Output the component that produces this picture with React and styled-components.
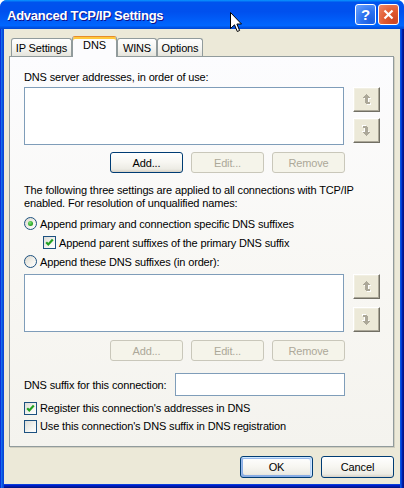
import styled, { createGlobalStyle } from "styled-components";

const GlobalStyle = createGlobalStyle`
  html, body {
    margin: 0;
    padding: 0;
    background: #fff;
  }
  body {
    font-family: "Liberation Sans", Arial, sans-serif;
    font-size: 11px;
    letter-spacing: -0.15px;
    color: #000;
  }
`;

const Window = styled.div`
  position: relative;
  width: 404px;
  height: 488px;
  display: flex;
  flex-direction: column;
  border-radius: 7px 7px 0 0;
  overflow: hidden;
  background: #0054e3;
`;

const TitleBar = styled.div`
  height: 29px;
  box-sizing: border-box;
  display: flex;
  align-items: center;
  padding: 1px 5px 0 7px;
  background: linear-gradient(
    180deg,
    #0997ff 0%,
    #0053ee 8%,
    #0050ee 40%,
    #0066ff 88%,
    #0055e8 94%,
    #0047d2 100%
  );
  color: #fff;
  font-weight: bold;
  font-size: 13px;
  text-shadow: 1px 1px #0f1089;
`;

const TitleText = styled.span`
  flex: 1;
  letter-spacing: -0.25px;
`;

const Controls = styled.div`
  display: flex;
  gap: 2px;
  margin-top: -2px;
`;

const ControlButton = styled.div`
  width: 21px;
  height: 21px;
  box-sizing: border-box;
  border: 1px solid #fff;
  border-radius: 3px;
  display: flex;
  align-items: center;
  justify-content: center;
  background: ${(p) =>
    p.$close
      ? "radial-gradient(circle at 80% 85%, #cc4624 0%, #e0592f 45%, #f08a6a 100%)"
      : "radial-gradient(circle at 80% 85%, #1b5ee0 0%, #2d73f0 45%, #6fa6ff 100%)"};
  color: #fff;
  font-size: 15px;
  font-weight: bold;
  text-shadow: none;
`;

const Body = styled.div`
  flex: 1;
  display: flex;
  flex-direction: column;
  background: #ece9d8;
  padding: 7px 10px 10px 9px;
  box-shadow: inset 1px 0 #0831d9, inset 2px 0 #166aee, inset 3px 0 #0855dd,
    inset 4px 0 #0a46d8, inset -1px 0 #00138c, inset -2px 0 #001ea0,
    inset -3px 0 #003bda, inset -4px 0 #0855dd, inset 0 -1px #00138c,
    inset 0 -2px #001ea0, inset 0 -3px #0019cf, inset 0 -4px #0a3fd6;
`;

const TabList = styled.div`
  display: flex;
  align-items: flex-end;
  height: 20px;
  margin-left: 2px;
  position: relative;
  z-index: 1;
`;

const Tab = styled.div`
  width: ${(p) => p.$w}px;
  height: ${(p) => (p.$active ? 21 : 18)}px;
  margin-bottom: ${(p) => (p.$active ? -1 : 0)}px;
  box-sizing: border-box;
  border: 1px solid #919b9c;
  border-bottom: none;
  border-top-color: ${(p) => (p.$active ? "#e68b2c" : "#919b9c")};
  border-radius: 3px 3px 0 0;
  background: ${(p) =>
    p.$active ? "#fcfcfe" : "linear-gradient(180deg, #fff 0%, #f3f3ef 60%, #e5e4dc 100%)"};
  box-shadow: ${(p) => (p.$active ? "inset 0 2px #ffc83c" : "none")};
  display: flex;
  justify-content: center;
  align-items: center;
  padding-bottom: ${(p) => (p.$active ? 4 : 0)}px;
`;

const Panel = styled.div`
  border: 1px solid #919b9c;
  box-shadow: 1px 1px 0 #d0cebf;
  background: linear-gradient(180deg, #fcfcfe 0%, #f8f7f3 60%, #f4f3ee 100%);
  padding: 14px 13px 11px 14px;
  display: flex;
  flex-direction: column;
`;

const Label = styled.div`
  line-height: 13px;
  margin-top: ${(p) => p.$mt || 0}px;
`;

const ListRow = styled.div`
  display: flex;
  gap: 9px;
  margin-top: ${(p) => p.$mt}px;
`;

const ListBox = styled.div`
  width: 321px;
  height: 58px;
  box-sizing: border-box;
  border: 1px solid #7f9db9;
  background: #fff;
`;

const SideButtons = styled.div`
  display: flex;
  flex-direction: column;
  gap: ${(p) => p.$gap}px;
`;

const MoveButton = styled.div`
  width: 27px;
  height: 25px;
  box-sizing: border-box;
  background: #ece9d8;
  border: 1px solid;
  border-color: #fff #716f64 #716f64 #fff;
  box-shadow: inset -1px -1px #aca899, inset 1px 1px #f1efe2;
  display: flex;
  align-items: center;
  justify-content: center;
`;

const ButtonRow = styled.div`
  display: flex;
  justify-content: flex-end;
  gap: 8px;
  width: 321px;
  margin-top: ${(p) => p.$mt}px;
`;

const PushButton = styled.div`
  width: 73px;
  height: ${(p) => p.$h || 21}px;
  box-sizing: border-box;
  border: 1px solid ${(p) => (p.$disabled ? "#c9c7ba" : "#003c74")};
  border-radius: 3px;
  background: ${(p) =>
    p.$disabled
      ? "#f5f4ea"
      : "linear-gradient(180deg, #fff 0%, #f7f6f1 50%, #ecebe4 85%, #d6d0c5 100%)"};
  color: ${(p) => (p.$disabled ? "#aca899" : "#000")};
  box-shadow: ${(p) =>
    p.$default
      ? "inset -1px 1px #cee7ff, inset 1px 2px #98b8ea, inset -2px 2px #bcd4f6, inset 1px -1px #89ade4, inset 2px -2px #89ade4"
      : "none"};
  display: flex;
  align-items: center;
  justify-content: center;
`;

const Paragraph = styled.div`
  line-height: 13px;
  margin-top: 11px;
`;

const Options = styled.div`
  margin-top: ${(p) => p.$mt}px;
`;

const OptionRow = styled.div`
  display: flex;
  align-items: center;
  height: ${(p) => p.$h || 19}px;
  padding-left: ${(p) => p.$indent || 0}px;
  gap: 3px;
`;

const Radio = styled.span`
  width: 13px;
  height: 13px;
  box-sizing: border-box;
  border-radius: 50%;
  border: 1px solid #1c5180;
  background: linear-gradient(135deg, #dcd9ce 0%, #f4f3ee 60%, #fff 100%);
  display: flex;
  align-items: center;
  justify-content: center;

  &::after {
    content: "";
    display: ${(p) => (p.$checked ? "block" : "none")};
    width: 5px;
    height: 5px;
    border-radius: 50%;
    background: radial-gradient(circle at 40% 35%, #80e67c 0%, #2ea72a 60%, #1a8f16 100%);
  }
`;

const Box = styled.span`
  width: 13px;
  height: 13px;
  box-sizing: border-box;
  border: 1px solid #1c5180;
  background: linear-gradient(135deg, #dcdcd7 0%, #f4f4f0 60%, #fff 100%);
  display: flex;
  align-items: center;
  justify-content: center;
`;

const SuffixRow = styled.div`
  display: flex;
  align-items: center;
  margin-top: 12px;
`;

const SuffixLabel = styled.span`
  width: 151px;
`;

const TextInput = styled.div`
  width: 170px;
  height: 23px;
  box-sizing: border-box;
  border: 1px solid #7f9db9;
  background: #fff;
`;

const Footer = styled.div`
  display: flex;
  justify-content: flex-end;
  gap: 8px;
  margin-top: 9px;
`;

const Cursor = styled.svg`
  position: absolute;
  left: 230px;
  top: 12px;
`;

const ArrowIcon = ({ down }) => (
  <svg width="10" height="12" viewBox="0 0 10 12" shapeRendering="crispEdges">
    <g transform={down ? "rotate(180 4.5 5.5)" : undefined}>
      <path
        d="M5 1h1v1h-1z M4 2h3v1h-3z M3 3h5v1h-5z M2 4h7v1h-7z M4 5h3v4h-3z M4 9h5v1h-5z M5 10h4v1h-4z"
        fill="#fff"
      />
      <path
        d="M4 0h1v1h-1z M3 1h3v1h-3z M2 2h5v1h-5z M1 3h7v1h-7z M3 4h3v4h-3z M3 8h5v1h-5z M4 9h4v1h-4z"
        fill="#aca899"
      />
    </g>
  </svg>
);

const Check = () => (
  <svg width="11" height="11" viewBox="0 0 11 11">
    <path d="M2.2 5.2 L4.3 7.4 L8.8 2.6" fill="none" stroke="#21a121" strokeWidth="2.2" />
  </svg>
);

const Checkbox = ({ checked }) => <Box>{checked && <Check />}</Box>;

const MoveButtons = ({ gap }) => (
  <SideButtons $gap={gap}>
    <MoveButton>
      <ArrowIcon />
    </MoveButton>
    <MoveButton>
      <ArrowIcon down />
    </MoveButton>
  </SideButtons>
);

const App = () => {
  return (
    <>
      <GlobalStyle />
      <Window>
        <TitleBar>
          <TitleText>Advanced TCP/IP Settings</TitleText>
          <Controls>
            <ControlButton>?</ControlButton>
            <ControlButton $close>
              <svg width="11" height="11" viewBox="0 0 11 11">
                <path d="M1.5 1.5 L9.5 9.5 M9.5 1.5 L1.5 9.5" stroke="#fff" strokeWidth="2.2" />
              </svg>
            </ControlButton>
          </Controls>
        </TitleBar>
        <Body>
          <TabList>
            <Tab $w={61}>IP Settings</Tab>
            <Tab $w={45} $active>
              DNS
            </Tab>
            <Tab $w={40}>WINS</Tab>
            <Tab $w={46}>Options</Tab>
          </TabList>
          <Panel>
            <Label>DNS server addresses, in order of use:</Label>
            <ListRow $mt={3}>
              <ListBox />
              <MoveButtons gap={6} />
            </ListRow>
            <ButtonRow $mt={7}>
              <PushButton>Add...</PushButton>
              <PushButton $disabled>Edit...</PushButton>
              <PushButton $disabled>Remove</PushButton>
            </ButtonRow>
            <Paragraph>
              The following three settings are applied to all connections with TCP/IP
              <br />
              enabled. For resolution of unqualified names:
            </Paragraph>
            <Options $mt={4}>
              <OptionRow>
                <Radio $checked />
                <span>Append primary and connection specific DNS suffixes</span>
              </OptionRow>
              <OptionRow $indent={19}>
                <Checkbox checked />
                <span>Append parent suffixes of the primary DNS suffix</span>
              </OptionRow>
              <OptionRow>
                <Radio />
                <span>Append these DNS suffixes (in order):</span>
              </OptionRow>
            </Options>
            <ListRow $mt={3}>
              <ListBox />
              <MoveButtons gap={8} />
            </ListRow>
            <ButtonRow $mt={8}>
              <PushButton $disabled>Add...</PushButton>
              <PushButton $disabled>Edit...</PushButton>
              <PushButton $disabled>Remove</PushButton>
            </ButtonRow>
            <SuffixRow>
              <SuffixLabel>DNS suffix for this connection:</SuffixLabel>
              <TextInput />
            </SuffixRow>
            <Options $mt={3}>
              <OptionRow $h={18}>
                <Checkbox checked />
                <span>Register this connection's addresses in DNS</span>
              </OptionRow>
              <OptionRow $h={18}>
                <Checkbox />
                <span>Use this connection's DNS suffix in DNS registration</span>
              </OptionRow>
            </Options>
          </Panel>
          <Footer>
            <PushButton $h={22} $default>
              OK
            </PushButton>
            <PushButton $h={22}>Cancel</PushButton>
          </Footer>
        </Body>
        <Cursor width="13" height="21" viewBox="0 0 13 21">
          <path
            d="M0.5 0.5 L0.5 16.5 L4.5 12.8 L7.3 19.5 L9.6 18.5 L6.9 12 L11.5 12 Z"
            fill="#fff"
            stroke="#000"
            strokeWidth="1"
          />
        </Cursor>
      </Window>
    </>
  );
};

export default App;
